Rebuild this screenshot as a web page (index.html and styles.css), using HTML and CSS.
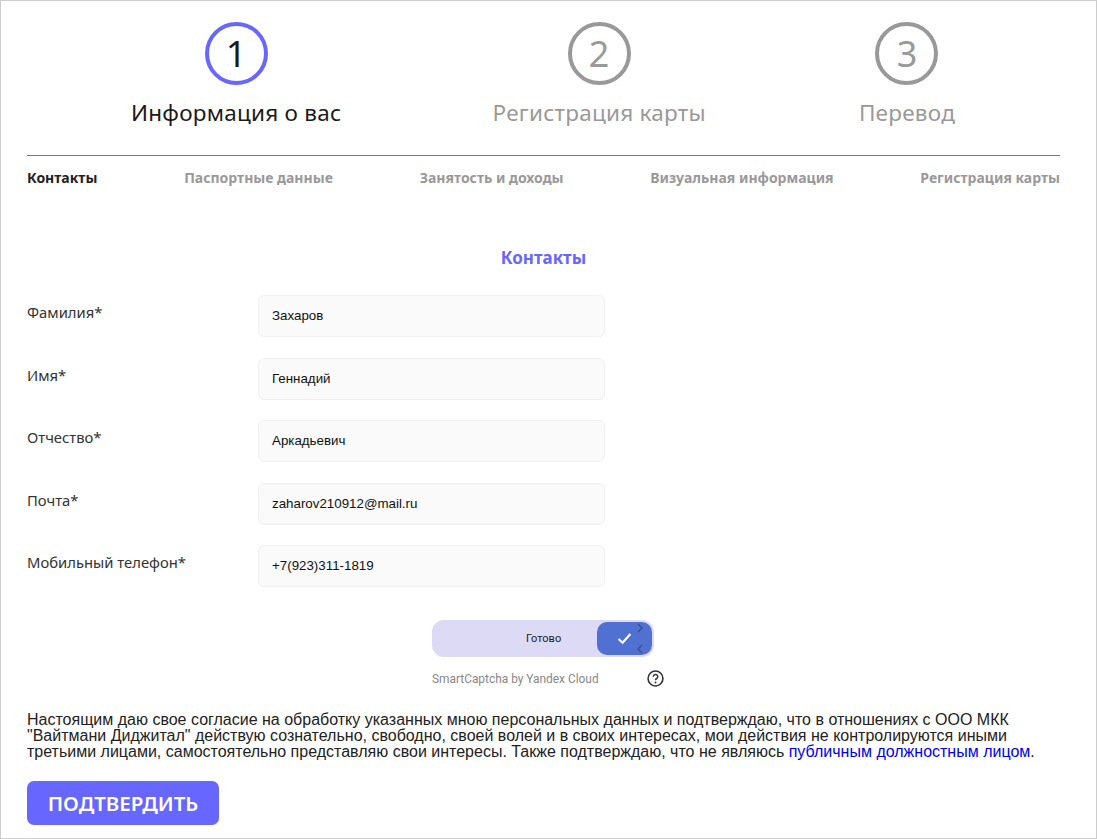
FILE: index.html
```html
<!DOCTYPE html>
<html lang="ru">
<head>
<meta charset="utf-8">
<title>Контакты</title>
<link rel="stylesheet" href="styles.css">
</head>
<body>
<div class="page">
  <div class="steps">
    <div class="step active"><div class="circle">1</div><div class="step-label">Информация о вас</div></div>
    <div class="step"><div class="circle">2</div><div class="step-label">Регистрация карты</div></div>
    <div class="step"><div class="circle">3</div><div class="step-label">Перевод</div></div>
  </div>
  <nav class="tabs">
    <span class="tab current">Контакты</span>
    <span class="tab">Паспортные данные</span>
    <span class="tab">Занятость и доходы</span>
    <span class="tab">Визуальная информация</span>
    <span class="tab">Регистрация карты</span>
  </nav>
  <h2 class="title">Контакты</h2>
  <form class="form">
    <div class="row"><label class="label">Фамилия*</label><div class="input">Захаров</div></div>
    <div class="row"><label class="label">Имя*</label><div class="input">Геннадий</div></div>
    <div class="row"><label class="label">Отчество*</label><div class="input">Аркадьевич</div></div>
    <div class="row"><label class="label">Почта*</label><div class="input">zaharov210912@mail.ru</div></div>
    <div class="row"><label class="label">Мобильный телефон*</label><div class="input">+7(923)311-1819</div></div>
  </form>
  <div class="captcha">
    <div class="slider">
      <span class="slider-text">Готово</span>
      <div class="knob">
        <svg class="check" viewBox="0 0 14 12" width="15" height="13"><path d="M1.5 6.5 5.2 10 12.5 1.8" fill="none" stroke="#fff" stroke-width="2"/></svg>
        <svg class="chev chev-top" viewBox="0 0 6 10" width="6" height="10"><path d="M1 1 5 5 1 9" fill="none" stroke="#3d4a80" stroke-width="1.2"/></svg>
        <svg class="chev chev-bottom" viewBox="0 0 6 10" width="6" height="10"><path d="M5 1 1 5 5 9" fill="none" stroke="#3d4a80" stroke-width="1.2"/></svg>
      </div>
    </div>
    <div class="captcha-foot">
      <span class="brand">SmartCaptcha by Yandex Cloud</span>
      <svg class="help" viewBox="0 0 16 16" width="17" height="17"><circle cx="8" cy="8" r="7" fill="none" stroke="#333" stroke-width="1.5"/><path d="M5.9 6.3a2.1 2.1 0 1 1 3.3 1.7c-.8.5-1.2.9-1.2 1.7" fill="none" stroke="#333" stroke-width="1.4"/><circle cx="8" cy="11.8" r=".9" fill="#333"/></svg>
    </div>
  </div>
  <p class="consent">Настоящим даю свое согласие на обработку указанных мною персональных данных и подтверждаю, что в отношениях с ООО МКК "Вайтмани Диджитал" действую сознательно, свободно, своей волей и в своих интересах, мои действия не контролируются иными третьими лицами, самостоятельно представляю свои интересы. Также подтверждаю, что не являюсь <a href="#" class="link">публичным должностным лицом</a>.</p>
  <button type="button" class="submit">ПОДТВЕРДИТЬ</button>
</div>
</body>
</html>
```

FILE: styles.css
```css
* { box-sizing: border-box; }
html, body { margin: 0; padding: 0; background: #fff; }
body { font-family: "Noto Sans", sans-serif; color: #222; }
.page {
  width: 1097px;
  height: 839px;
  border: 1px solid #ccc;
  padding: 21px 36px 0 26px;
  overflow: hidden;
}
.steps { display: flex; justify-content: space-between; padding: 0 103px 0 104px; height: 133px; }
.step { display: flex; flex-direction: column; align-items: center; min-width: 100px; color: #999; }
.circle {
  width: 63px; height: 63px; border-radius: 50%;
  border: 4px solid #999;
  display: flex; align-items: center; justify-content: center;
  font-size: 36px; line-height: 1;
}
.step-label { font-size: 22.5px; line-height: 30px; margin-top: 13px; letter-spacing: .25px; white-space: nowrap; }
.step.active { color: #1a1a1a; }
.step.active .circle { border-color: #6766ff; }
.tabs {
  display: flex; justify-content: space-between;
  border-top: 1px solid #6766ff;
  padding-top: 13px;
  font-size: 14px; line-height: 18px; font-weight: 700; color: #999;
}
.tab.current { color: #222; }
.title { margin: 59px 0 0; text-align: center; font-size: 17px; line-height: 24px; font-weight: 700; color: #6766ff; }
.form { margin-top: 25px; display: flex; flex-direction: column; gap: 20.5px; }
.row { display: flex; height: 42px; }
.label { width: 231px; font-size: 14.8px; line-height: 20px; color: #333; margin-top: 7px; }
.input {
  width: 347px; height: 42px;
  background: #fafafa; border: 1px solid #f0f0f0; border-radius: 6px;
  padding: 0 13px 1px; display: flex; align-items: center;
  font-family: "Liberation Sans", sans-serif; font-size: 13.33px; color: #111;
}
.captcha { width: 232px; margin: 33px 0 0 405px; }
.slider {
  width: 222px; height: 37px; border-radius: 12px;
  background: #dcdaf5; position: relative;
  display: flex; align-items: center; padding-left: 94px;
}
.slider-text { font-family: "Roboto", sans-serif; font-size: 11px; color: #222; }
.knob { position: absolute; right: 2px; top: 2px; width: 55px; height: 33px; border-radius: 10px; background: #5071d2; }
.check { position: absolute; left: 20px; top: 10px; }
.chev { position: absolute; right: 9px; }
.chev-top { top: 1px; }
.chev-bottom { bottom: 1px; }
.captcha-foot { display: flex; justify-content: space-between; align-items: center; margin-top: 13px; }
.brand { font-family: "Roboto", sans-serif; font-size: 11.9px; color: #888; }
.consent {
  margin: 25px 0 0; font-family: "Liberation Sans", sans-serif;
  font-size: 16px; line-height: 16px; color: #222;
}
.link { color: #0000ee; text-decoration: none; }
.submit {
  display: block; margin-top: 21px;
  width: 192px; height: 44px; border: 0; border-radius: 7px;
  background: #6766ff; color: #fff;
  font-family: "Noto Sans", sans-serif; font-size: 20.5px; font-weight: 600;
}
```
